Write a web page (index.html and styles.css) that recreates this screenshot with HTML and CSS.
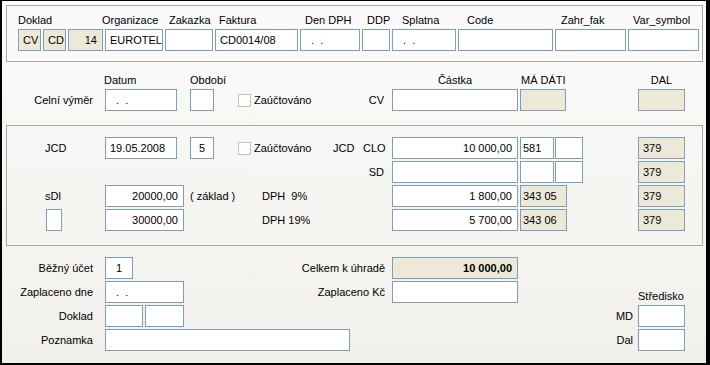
FILE: index.html
```html
<!DOCTYPE html>
<html lang="cs">
<head>
<meta charset="UTF-8">
<title>Celní výměr</title>
<link rel="stylesheet" href="styles.css">
</head>
<body>
<div class="window">
    <!-- hlavicka dokladu -->
    <div class="group top-group">
        <div class="row head">
            <span class="w84">Doklad</span>
            <span class="w67">Organizace</span>
            <span class="w50">Zakazka</span>
            <span class="w86">Faktura</span>
            <span class="w62">Den DPH</span>
            <span class="w35">DDP</span>
            <span class="w65">Splatna</span>
            <span class="w94">Code</span>
            <span class="w72">Zahr_fak</span>
            <span>Var_symbol</span>
        </div>
        <div class="row fields">
            <div class="fld ro c w23">CV</div>
            <div class="fld ro c w23">CD</div>
            <div class="fld ro num w35">14</div>
            <div class="fld w58">EUROTEL</div>
            <div class="fld w48"></div>
            <div class="fld w83">CD0014/08</div>
            <div class="fld date w60">.  .</div>
            <div class="fld w28"></div>
            <div class="fld date w64">.  .</div>
            <div class="fld w95"></div>
            <div class="fld w71"></div>
            <div class="fld w71"></div>
        </div>
    </div>

    <!-- celni vymer -->
    <div class="section mid">
        <div class="row head">
            <span class="w86 ml97">Datum</span>
            <span class="w202">Období</span>
            <span class="w126 c">Částka</span>
            <span class="w46 ml2 pl1">MÁ DÁTI</span>
            <span class="w47 ml72 c">DAL</span>
        </div>
        <div class="row">
            <span class="lead r">Celní výměr</span>
            <div class="fld date w72">.  .</div>
            <div class="fld w24 ml13"></div>
            <label class="check ml24 w92"><span class="box"></span>Zaúčtováno</label>
            <span class="w62 r pr8">CV</span>
            <div class="fld w126"></div>
            <div class="fld ro w46 ml2"></div>
            <div class="fld ro w47 ml72"></div>
        </div>
    </div>

    <!-- JCD -->
    <div class="group jcd-group">
        <div class="row">
            <span class="lead pl38">JCD</span>
            <div class="fld w72">19.05.2008</div>
            <div class="fld c w24 ml13">5</div>
            <label class="check ml24 w95"><span class="box"></span>Zaúčtováno</label>
            <span class="w30">JCD</span>
            <span class="w29">CLO</span>
            <div class="fld num w126">10 000,00</div>
            <div class="fld acc w34 ml2">581</div>
            <div class="fld w28 ml1"></div>
            <div class="fld ro dal w47 ml55">379</div>
        </div>
        <div class="row">
            <span class="w385 r pr8">SD</span>
            <div class="fld w126"></div>
            <div class="fld w34 ml2"></div>
            <div class="fld w28 ml1"></div>
            <div class="fld ro dal w47 ml55">379</div>
        </div>
        <div class="row">
            <span class="lead pl38">sDl</span>
            <div class="fld num w79">20000,00</div>
            <span class="w72 ml6">( základ )</span>
            <span class="w130">DPH&nbsp;&nbsp;9%</span>
            <div class="fld num w126">1 800,00</div>
            <div class="fld ro acc w47 ml2">343 05</div>
            <div class="fld ro dal w47 ml71">379</div>
        </div>
        <div class="row">
            <span class="lead pl39"><span class="fld w16"></span></span>
            <div class="fld num w79">30000,00</div>
            <span class="w78"></span>
            <span class="w130">DPH 19%</span>
            <div class="fld num w126">5 700,00</div>
            <div class="fld ro acc w47 ml2">343 06</div>
            <div class="fld ro dal w47 ml71">379</div>
        </div>
    </div>

    <!-- uhrada -->
    <div class="section bottom">
        <div class="row">
            <span class="lead r">Běžný účet</span>
            <div class="fld c w28">1</div>
            <span class="w259 r pr7">Celkem k úhradě</span>
            <div class="fld ro num bold w126">10 000,00</div>
        </div>
        <div class="row">
            <span class="lead r">Zaplaceno dne</span>
            <div class="fld date w79">.  .</div>
            <span class="w208 r pr7">Zaplaceno Kč</span>
            <div class="fld w126"></div>
            <span class="ml120 caption">Středisko</span>
        </div>
        <div class="row">
            <span class="lead r">Doklad</span>
            <div class="fld w38"></div>
            <div class="fld w39 ml2"></div>
            <span class="w454 r pr5">MD</span>
            <div class="fld w47"></div>
        </div>
        <div class="row">
            <span class="lead r">Poznamka</span>
            <div class="fld w245"></div>
            <span class="w288 r pr5">Dal</span>
            <div class="fld w47"></div>
        </div>
    </div>
</div>
</body>
</html>
```

FILE: styles.css
```css
* {
    box-sizing: border-box;
}
body {
    margin: 0;
    font-family: "Liberation Sans", Arial, sans-serif;
    font-size: 11px;
    color: #000;
}
.window {
    width: 710px;
    height: 365px;
    border: solid #000;
    border-width: 1px 4px 2px 2px;
    background: linear-gradient(#fcfcfc, #f7f7f5 35%, #f1f0eb);
}

/* group boxes */
.group {
    width: 697px;
    margin-left: 4px;
    border: 1px solid #aca899;
}
.top-group {
    margin-top: 4px;
    height: 57px;
    padding: 7px 0 0 11px;
    background: #fafafa;
}
.jcd-group {
    height: 121px;
    padding-top: 11px;
    display: flex;
    flex-direction: column;
    gap: 2px;
}
.section {
    padding-left: 5px;
}
.mid {
    height: 63px;
    padding-top: 11px;
}
.bottom {
    padding-top: 11px;
    display: flex;
    flex-direction: column;
    gap: 2px;
}

/* rows */
.row {
    display: flex;
    align-items: center;
    height: 22px;
    white-space: nowrap;
}
.row > * {
    flex: none;
}
.row.head {
    height: 14px;
    line-height: 14px;
    margin-bottom: 2px;
}
.fields {
    gap: 2px;
}
.lead {
    width: 98px;
}
.lead.r {
    text-align: right;
    padding-right: 12px;
}
.caption {
    align-self: flex-end;
    line-height: 14px;
}

/* edit boxes */
.fld {
    display: block;
    height: 22px;
    border: 1px solid #7f9db9;
    background: #fff;
    line-height: 20px;
    padding: 0 4px;
    white-space: pre;
    overflow: hidden;
}
.fld.ro {
    background: #ece9d8;
}
.fld.num {
    text-align: right;
    padding-right: 5px;
}
.fld.date {
    padding-left: 10px;
}
.fld.acc {
    padding-left: 2px;
}
.fld.dal {
    padding-left: 4px;
}
.fld.w16 {
    height: 22px;
}
.bold {
    font-weight: bold;
}

.check {
    display: flex;
    align-items: center;
}
.box {
    width: 13px;
    height: 13px;
    border: 1px solid #c7c4b6;
    background: #fff;
    margin-right: 3px;
}

/* alignment helpers */
.c { text-align: center; }
.r { text-align: right; }
.pl1 { padding-left: 1px; }
.pl38 { padding-left: 38px; }
.pl39 { padding-left: 39px; }
.pr5 { padding-right: 5px; }
.pr7 { padding-right: 7px; }
.pr8 { padding-right: 8px; }
.ml1 { margin-left: 1px; }
.ml2 { margin-left: 2px; }
.ml6 { margin-left: 6px; }
.ml13 { margin-left: 13px; }
.ml24 { margin-left: 24px; }
.ml55 { margin-left: 55px; }
.ml71 { margin-left: 71px; }
.ml72 { margin-left: 72px; }
.ml97 { margin-left: 97px; }
.ml120 { margin-left: 120px; }

/* widths */
.w16 { width: 16px; }
.w23 { width: 23px; }
.w24 { width: 24px; }
.w28 { width: 28px; }
.w29 { width: 29px; }
.w30 { width: 30px; }
.w34 { width: 34px; }
.w35 { width: 35px; }
.w38 { width: 38px; }
.w39 { width: 39px; }
.w46 { width: 46px; }
.w47 { width: 47px; }
.w48 { width: 48px; }
.w50 { width: 50px; }
.w58 { width: 58px; }
.w60 { width: 60px; }
.w62 { width: 62px; }
.w64 { width: 64px; }
.w65 { width: 65px; }
.w67 { width: 67px; }
.w71 { width: 71px; }
.w72 { width: 72px; }
.w78 { width: 78px; }
.w79 { width: 79px; }
.w83 { width: 83px; }
.w84 { width: 84px; }
.w86 { width: 86px; }
.w92 { width: 92px; }
.w94 { width: 94px; }
.w95 { width: 95px; }
.w126 { width: 126px; }
.w130 { width: 130px; }
.w202 { width: 202px; }
.w208 { width: 208px; }
.w245 { width: 245px; }
.w259 { width: 259px; }
.w288 { width: 288px; }
.w385 { width: 385px; }
.w454 { width: 454px; }
```
